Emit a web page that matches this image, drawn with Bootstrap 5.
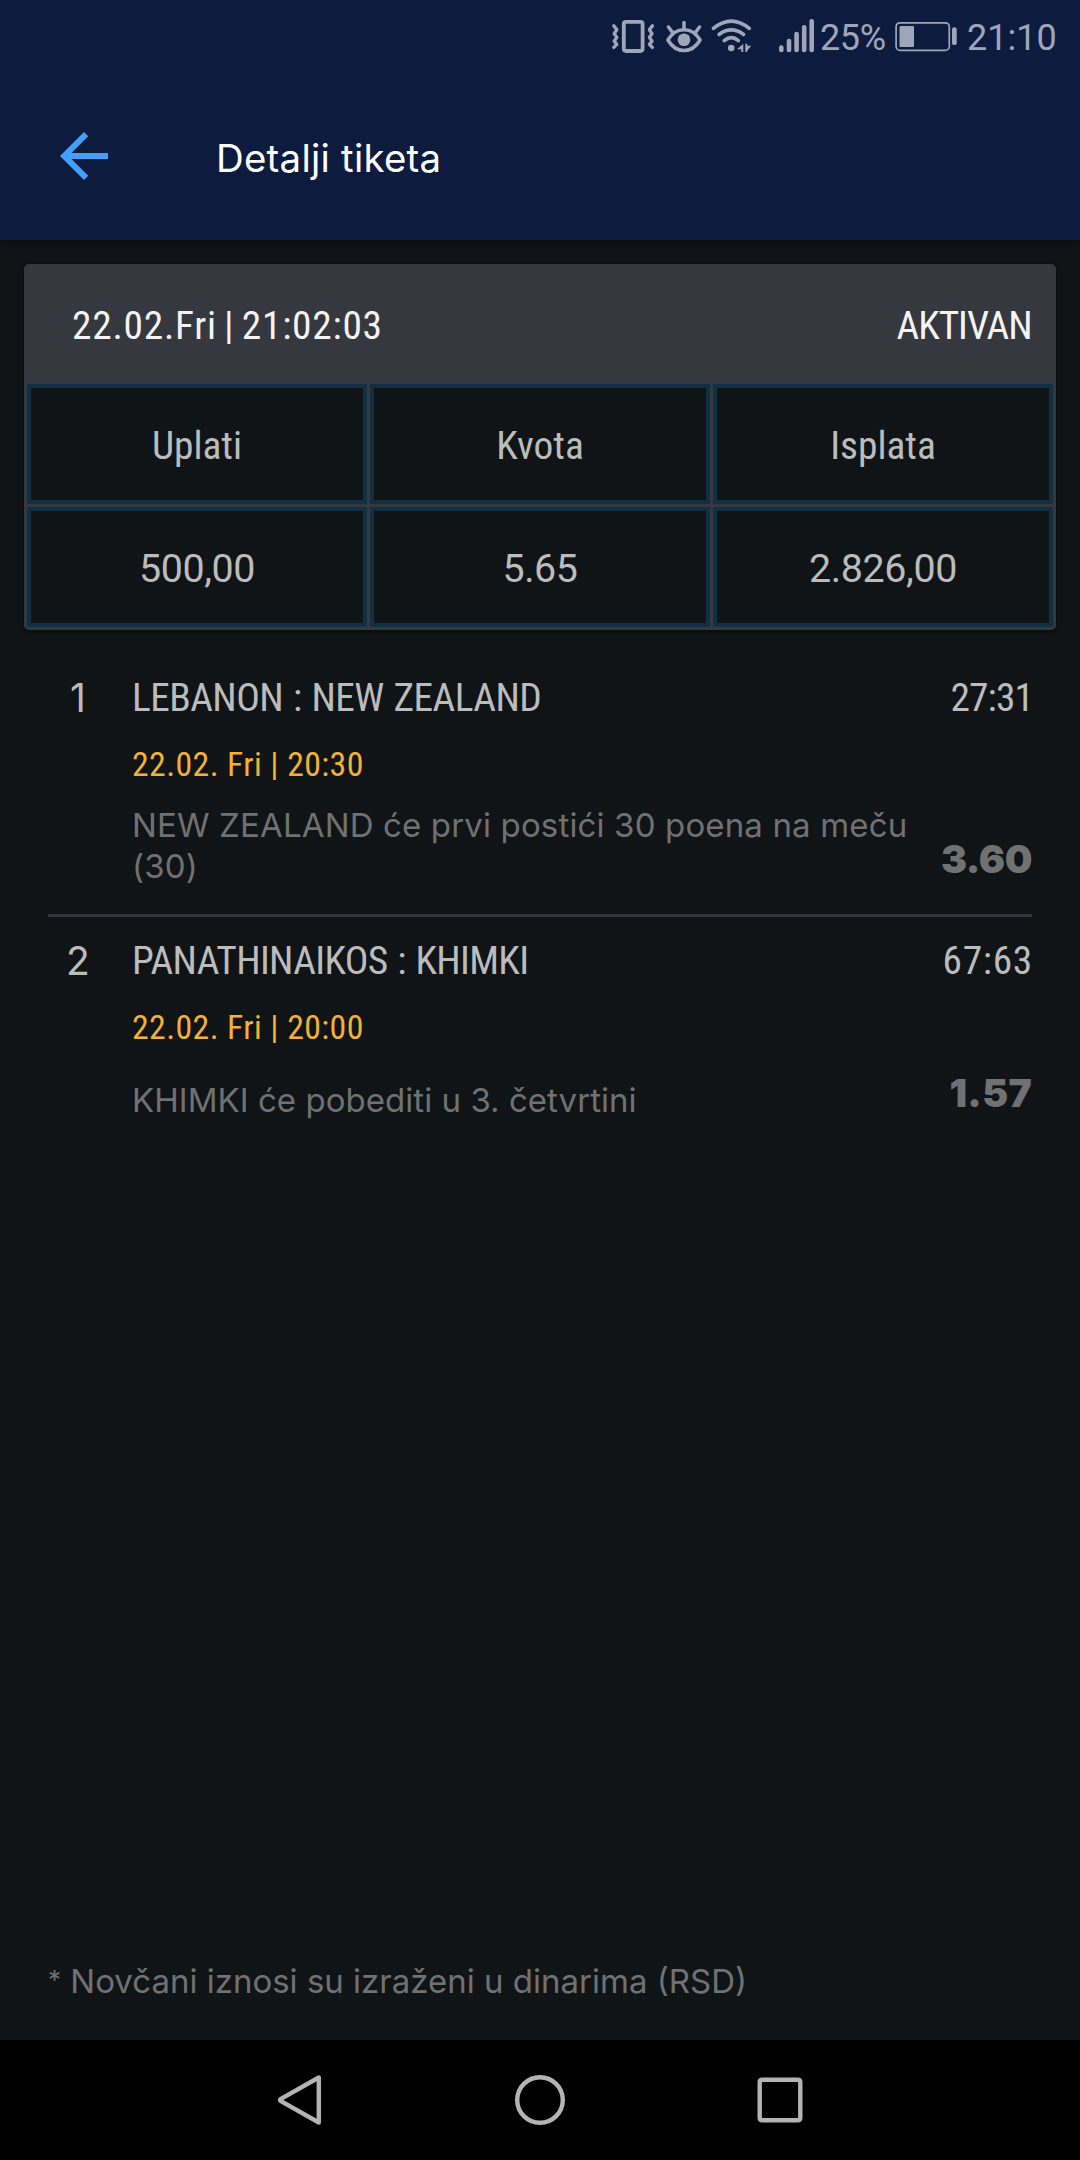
<!DOCTYPE html>
<html lang="sr-Latn">
<head>
<meta charset="utf-8">
<meta name="viewport" content="width=device-width, initial-scale=1">
<title>Detalji tiketa</title>
<link href="https://cdn.jsdelivr.net/npm/bootstrap@5.3.0/dist/css/bootstrap.min.css" rel="stylesheet">
<style>
body{background:#101416;color:#bbbcbc;font-family:Roboto,"Liberation Sans",sans-serif;height:2160px;overflow:hidden}
svg{display:block;flex:none}
.app-top{background:#0d1b3e;box-shadow:0 2px 10px rgba(0,0,0,.45)}
.status-row{height:72px;padding-left:610px;color:#9fa6b9;font-size:36px;line-height:72px}
.status-row svg{height:72px}
.status-text{padding-top:2px;white-space:nowrap}
.gap-eye{margin-left:8px}
.gap-wifi{margin-left:6px}
.gap-signal{margin-left:24px}
.gap-percent{margin-left:5px;width:73px;letter-spacing:-.4px}
.gap-clock{margin-left:9px}
.title-row{height:168px;padding:0 60px}
.app-title{font-family:Inter,sans-serif;font-weight:400;font-size:38.4px;line-height:48px;color:#fff;margin:4px 0 0 108px;letter-spacing:.25px}
.ticket{margin:24px 24px 0;padding:0 3px 3px;background:#363840;border-radius:5px;box-shadow:0 1px 5px rgba(0,0,0,.6)}
.ticket-head{height:120px;padding:3px 21.5px 0 45px;color:#f4f4f5}
.cond{font-size:39.4px;line-height:48px;white-space:nowrap;font-stretch:75%}
.ticket-grid{display:grid;grid-template-columns:340px 340px 340px;gap:3px}
.ticket-cell{height:120px;background:#101416;border:4px solid #113044;padding-top:3px}
.stamp{letter-spacing:.75px;word-spacing:-2.5px}
.state{letter-spacing:-1.05px}
.amount{font-stretch:100%;letter-spacing:-.4px}
.bets{padding:24px 48px 0}
.bet{padding-top:20px}
.bet + .bet{border-top:3px solid #33363c}
.bet-no{width:60px;font-family:Inter,sans-serif;font-size:39px;line-height:48px}
.bet-info{margin-left:24px}
.teams{letter-spacing:-.55px;word-spacing:1.3px}
.bet:last-child .teams{letter-spacing:-.65px}
.score-a,.score-b{margin-right:-1px}
.score-a{letter-spacing:-.9px}
.score-b{letter-spacing:.7px}
.kickoff{margin-top:23px;font-size:33.8px;line-height:40px;color:#f3b232;font-stretch:75%;letter-spacing:.4px}
.bet-foot{margin-top:20px;padding-bottom:27px}
.pick{width:800px;font-family:Inter,sans-serif;font-size:33px;line-height:41px;color:#707172;letter-spacing:.15px}
.odd{font-family:Inter,sans-serif;font-weight:900;font-size:39px;line-height:48px;color:#707172;letter-spacing:-.4px}
.bet:first-child .odd{margin-top:30px}
.bet:last-child .pick{margin-top:12px;letter-spacing:.04px}
.bet:last-child .odd{margin-top:1px;letter-spacing:.3px}
.note{padding:0 48px 38px;font-family:Inter,sans-serif;font-size:33px;line-height:41px;color:#707172}
.star{font-size:26px;vertical-align:4px;line-height:1}
.nav-row{height:120px;background:#000}
.nav-slot{width:240px}
</style>
</head>
<body class="d-flex flex-column">
<header class="app-top flex-shrink-0">
  <div class="status-row d-flex">
    <svg width="46" viewBox="610 0 46 72" fill="none" stroke="#9fa6b9" stroke-width="3.8" stroke-linecap="round" stroke-linejoin="round"><rect x="623.8" y="21.8" width="18.8" height="29.2" rx="2.2"/><path stroke-width="3.4" d="M613.8 25.8l3 4-2.6 3.8 2.6 3.8-2.6 3.8 2.6 3.2-3 3M652.4 25.8l-3 4 2.6 3.8-2.6 3.8 2.6 3.8-2.6 3.2 3 3"/></svg>
    <svg class="gap-eye" width="40" viewBox="664 0 40 72" fill="none" stroke="#9fa6b9" stroke-width="3.5" stroke-linecap="round"><path stroke-linejoin="round" d="M667.9 40c3.5-6 9.3-10.3 16.1-10.3s12.6 4.3 16.1 10.3c-3.5 6-9.3 10.5-16.1 10.5s-12.6-4.5-16.1-10.5z"/><path d="M684 22.5v6.5M668.5 27l3.5 4.8M699.5 27l-3.5 4.8"/><circle cx="684" cy="39.8" r="6.3" fill="#9fa6b9" stroke="none"/></svg>
    <svg class="gap-wifi" width="43" viewBox="710 0 43 72" fill="none" stroke="#9fa6b9" stroke-width="3.6" stroke-linecap="round"><path d="M713.4 28.4Q731.3 13.8 749.3 28.4M719 34.5Q731.3 25.4 743.6 34.5M724.2 40.6Q731.3 34.6 738.4 40.6"/><circle cx="731.2" cy="48" r="3.3" fill="#9fa6b9" stroke="none"/><path fill="#9fa6b9" stroke="none" d="M743.3 43.7V52h-2v-2.7H737zM745.3 43.7V52h1.9v-1.3l4-5h-4v-2z"/></svg>
    <svg class="gap-signal" width="38" viewBox="777 0 38 72" stroke="#9fa6b9" stroke-width="4.6" stroke-linecap="round"><path d="M781.3 47.5V50M789 41v9M796.6 34v16M804.2 27.2V50M811.7 21.2V50"/></svg>
    <span class="status-text gap-percent">25%</span>
    <svg width="65" viewBox="893 0 65 72" fill="#9fa6b9"><rect x="896.1" y="22.8" width="53.2" height="27.6" rx="4" fill="none" stroke="#9fa6b9" stroke-width="1.7"/><rect x="899.5" y="26" width="14.5" height="21" rx="1"/><rect x="952" y="27.3" width="4.7" height="17.8" rx="2.2"/></svg>
    <span class="status-text gap-clock">21:10</span>
  </div>
  <div class="title-row d-flex align-items-center">
    <svg width="48" height="48" viewBox="4 4 16 16" fill="#42a0fb"><path d="M20 11H7.83l5.59-5.59L12 4l-8 8 8 8 1.41-1.41L7.83 13H20v-2z"/></svg>
    <h1 class="app-title">Detalji tiketa</h1>
  </div>
</header>

<section class="ticket flex-shrink-0">
  <div class="ticket-head cond d-flex align-items-center justify-content-between"><span class="stamp">22.02.Fri | 21:02:03</span><span class="state">AKTIVAN</span></div>
  <div class="ticket-grid cond">
    <div class="ticket-cell d-flex align-items-center justify-content-center">Uplati</div>
    <div class="ticket-cell d-flex align-items-center justify-content-center">Kvota</div>
    <div class="ticket-cell d-flex align-items-center justify-content-center">Isplata</div>
    <div class="ticket-cell amount d-flex align-items-center justify-content-center">500,00</div>
    <div class="ticket-cell amount d-flex align-items-center justify-content-center">5.65</div>
    <div class="ticket-cell amount d-flex align-items-center justify-content-center">2.826,00</div>
  </div>
</section>

<main class="bets flex-grow-1">
  <article class="bet d-flex">
    <div class="bet-no text-center">1</div>
    <div class="bet-info flex-grow-1">
      <div class="cond d-flex justify-content-between"><span class="teams">LEBANON : NEW ZEALAND</span><span class="score-a">27:31</span></div>
      <div class="kickoff">22.02. Fri | 20:30</div>
      <div class="bet-foot d-flex justify-content-between"><div class="pick">NEW ZEALAND će prvi postići 30 poena na meču (30)</div><div class="odd">3.60</div></div>
    </div>
  </article>
  <article class="bet d-flex">
    <div class="bet-no text-center">2</div>
    <div class="bet-info flex-grow-1">
      <div class="cond d-flex justify-content-between"><span class="teams">PANATHINAIKOS : KHIMKI</span><span class="score-b">67:63</span></div>
      <div class="kickoff">22.02. Fri | 20:00</div>
      <div class="bet-foot d-flex justify-content-between"><div class="pick">KHIMKI će pobediti u 3. četvrtini</div><div class="odd">1.57</div></div>
    </div>
  </article>
</main>

<footer class="flex-shrink-0">
  <div class="note"><span class="star">*</span> Novčani iznosi su izraženi u dinarima (RSD)</div>
  <nav class="nav-row d-flex justify-content-center align-items-center">
    <div class="nav-slot d-flex justify-content-center"><svg width="52" height="52" viewBox="274 2074 52 52" fill="none" stroke="#b4b4b4" stroke-width="4.4" stroke-linejoin="round"><path d="M318.8 2077.5v45L280.5 2100.8q-1-.8 0-1.6z"/></svg></div>
    <div class="nav-slot d-flex justify-content-center"><svg width="52" height="52" viewBox="514 2074 52 52" fill="none" stroke="#b4b4b4" stroke-width="4.4"><circle cx="540" cy="2100" r="22.8"/></svg></div>
    <div class="nav-slot d-flex justify-content-center"><svg width="52" height="52" viewBox="754 2074 52 52" fill="none" stroke="#b4b4b4" stroke-width="4.4"><rect x="759.7" y="2079.7" width="40.6" height="40.6" rx="2"/></svg></div>
  </nav>
</footer>
<script src="https://cdn.jsdelivr.net/npm/bootstrap@5.3.0/dist/js/bootstrap.bundle.min.js"></script>
</body>
</html>
